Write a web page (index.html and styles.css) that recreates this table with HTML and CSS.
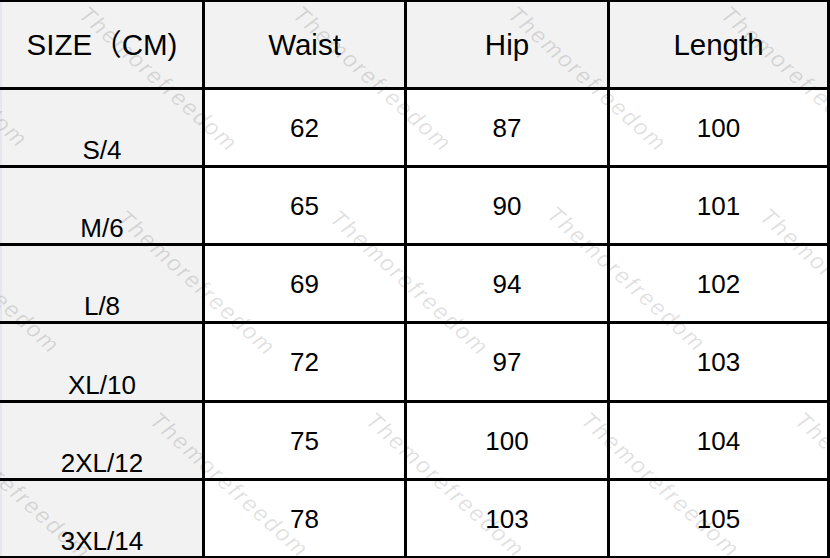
FILE: index.html
```html
<!DOCTYPE html>
<html lang="en">
<head>
<meta charset="utf-8">
<title>Size chart</title>
<link rel="stylesheet" href="styles.css">
</head>
<body>
<div class="chart">
  <div class="grid">
    <div class="cell head first">SIZE（CM)</div>
    <div class="cell head">Waist</div>
    <div class="cell head">Hip</div>
    <div class="cell head">Length</div>

    <div class="cell size">S/4</div>
    <div class="cell">62</div>
    <div class="cell">87</div>
    <div class="cell">100</div>

    <div class="cell size">M/6</div>
    <div class="cell">65</div>
    <div class="cell">90</div>
    <div class="cell">101</div>

    <div class="cell size">L/8</div>
    <div class="cell">69</div>
    <div class="cell">94</div>
    <div class="cell">102</div>

    <div class="cell size">XL/10</div>
    <div class="cell">72</div>
    <div class="cell">97</div>
    <div class="cell">103</div>

    <div class="cell size">2XL/12</div>
    <div class="cell">75</div>
    <div class="cell">100</div>
    <div class="cell">104</div>

    <div class="cell size">3XL/14</div>
    <div class="cell">78</div>
    <div class="cell">103</div>
    <div class="cell">105</div>
  </div>
  <div class="watermarks" aria-hidden="true">
    <span class="wm" style="left:-118px;top:-4px">Themorefreedom</span>
    <span class="wm" style="left:92px;top:0px">Themorefreedom</span>
    <span class="wm" style="left:306px;top:0px">Themorefreedom</span>
    <span class="wm" style="left:521px;top:0px">Themorefreedom</span>
    <span class="wm" style="left:734px;top:0px">Themorefreedom</span>

    <span class="wm" style="left:-86px;top:202px">Themorefreedom</span>
    <span class="wm" style="left:130px;top:204px">Themorefreedom</span>
    <span class="wm" style="left:343px;top:204px">Themorefreedom</span>
    <span class="wm" style="left:560px;top:200px">Themorefreedom</span>
    <span class="wm" style="left:773px;top:202px">Themorefreedom</span>

    <span class="wm" style="left:-55px;top:408px">Themorefreedom</span>
    <span class="wm" style="left:163px;top:406px">Themorefreedom</span>
    <span class="wm" style="left:379px;top:406px">Themorefreedom</span>
    <span class="wm" style="left:594px;top:406px">Themorefreedom</span>
    <span class="wm" style="left:808px;top:406px">Themorefreedom</span>
  </div>
</div>
</body>
</html>
```
FILE: styles.css
```css
html, body {
  margin: 0;
  padding: 0;
  background: #ffffff;
}

.chart {
  position: relative;
  width: 830px;
  height: 558px;
  overflow: hidden;
  font-family: "Liberation Sans", Arial, "Noto Sans CJK SC", sans-serif;
  color: #000000;
}

.grid {
  display: grid;
  grid-template-columns: 202px 199px 200px 217px;
  grid-template-rows: 85px 75px 75px 75px 76px 75px 75px;
  gap: 3px;
  padding: 2px 3px 2px 0;
  background: #000000;
  height: 558px;
  box-sizing: border-box;
}

.cell {
  display: flex;
  align-items: center;
  justify-content: center;
  background: #ffffff;
  font-size: 26px;
  line-height: 30px;
}

.cell.head {
  background: #f2f2f2;
  font-size: 29.5px;
  line-height: 34px;
  padding-bottom: 0;
}

.cell.first,
.cell.size {
  border-left: 2px solid #e6e6ee;
}

.cell.size {
  background: #f2f2f2;
  align-items: flex-end;
  padding-bottom: 0;
}

.watermarks {
  position: absolute;
  inset: 0;
  pointer-events: none;
}

.wm {
  position: absolute;
  white-space: nowrap;
  transform: rotate(42deg);
  transform-origin: 0 0;
  font-family: "Liberation Sans", Arial, sans-serif;
  font-style: italic;
  font-size: 23px;
  letter-spacing: 2px;
  line-height: 28px;
  color: rgba(0, 0, 0, 0.12);
}
```
